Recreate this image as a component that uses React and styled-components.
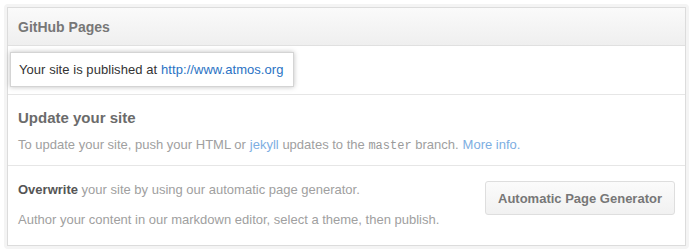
import React from "react";
import styled, { createGlobalStyle } from "styled-components";

const GlobalStyle = createGlobalStyle`
  body {
    margin: 0;
    background: #fff;
    font-family: "Liberation Sans", Arial, sans-serif;
    -webkit-font-smoothing: antialiased;
  }
`;

const Outer = styled.div`
  margin: 4px;
  width: 685px;
  box-sizing: border-box;
  padding: 3px;
  background: #f4f4f4;
  border-radius: 4px;
`;

const Box = styled.div`
  border: 1px solid #dcdcdc;
  background: #fff;
`;

const Header = styled.div`
  height: 37px;
  display: flex;
  align-items: center;
  padding: 0 10px;
  background: linear-gradient(#fafafa, #efefef);
  border-bottom: 1px solid #e0e0e0;
  font-size: 14px;
  font-weight: bold;
  color: #777;
`;

const Row = styled.div`
  display: flex;
  align-items: ${(p) => p.$align || "center"};
  justify-content: space-between;
  padding: ${(p) => p.$pad || "0 10px"};
  border-top: ${(p) => (p.$first ? "none" : "1px solid #e6e6e6")};
`;

const Published = styled.div`
  margin: 6px 0 7px -8px;
  padding: 0 10px 0 8px;
  height: 33px;
  display: flex;
  align-items: center;
  border: 1px solid #d4d4d4;
  background: #fff;
  box-shadow: 0 0 5px rgba(0, 0, 0, 0.25);
  font-size: 13px;
  letter-spacing: 0.05px;
  color: #333;
`;

const Link = styled.a`
  color: ${(p) => (p.$light ? "#7daee2" : "#2a72c4")};
  text-decoration: none;
  margin-left: 4px;
`;

const Heading = styled.div`
  font-size: 15px;
  font-weight: bold;
  color: #6b6b6b;
  margin-bottom: 10px;
`;

const Text = styled.p`
  margin: ${(p) => (p.$gap ? "12px 0 0" : "0")};
  font-size: 13px;
  color: #a0a0a0;
  line-height: 18px;

  strong {
    color: #555;
  }
`;

const Code = styled.code`
  font-family: "Liberation Mono", monospace;
  font-size: 12px;
  color: #999;
`;

const Button = styled.button`
  width: 190px;
  height: 34px;
  border: 1px solid #dedede;
  border-radius: 3px;
  background: linear-gradient(#fbfbfb, #f1f1f1);
  font-family: "Liberation Sans", Arial, sans-serif;
  font-size: 13px;
  font-weight: bold;
  color: #777;
`;

export default function App() {
  return (
    <>
      <GlobalStyle />
      <Outer>
        <Box>
          <Header>GitHub Pages</Header>
          <Row $first>
            <Published>
              Your site is published at
              <Link href="#">http://www.atmos.org</Link>
            </Published>
          </Row>
          <Row $pad="14px 10px 10px">
            <div>
              <Heading>Update your site</Heading>
              <Text>
                To update your site, push your HTML or
                <Link $light href="#">jekyll</Link> updates to the{" "}
                <Code>master</Code> branch.
                <Link $light href="#">More info.</Link>
              </Text>
            </div>
          </Row>
          <Row $align="flex-start" $pad="15px 10px 16px">
            <div>
              <Text>
                <strong>Overwrite</strong> your site by using our automatic page generator.
              </Text>
              <Text $gap>
                Author your content in our markdown editor, select a theme, then publish.
              </Text>
            </div>
            <Button>Automatic Page Generator</Button>
          </Row>
        </Box>
      </Outer>
    </>
  );
}
